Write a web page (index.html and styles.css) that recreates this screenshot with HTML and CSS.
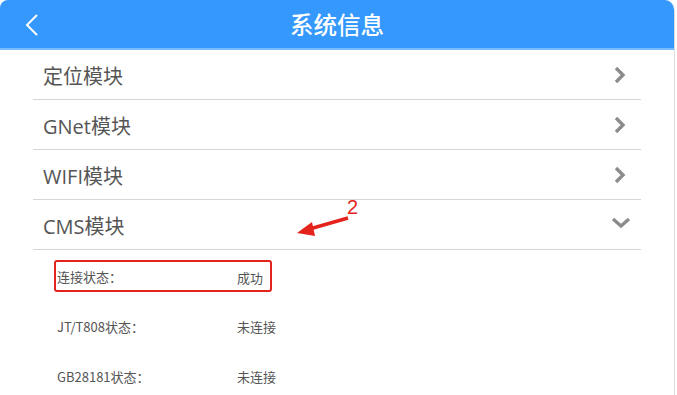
FILE: index.html
```html
<!DOCTYPE html>
<html lang="zh-CN">
<head>
  <meta charset="UTF-8" />
  <meta name="viewport" content="width=device-width, initial-scale=1.0"/>
  <title>系统信息</title>
  <link rel="stylesheet" href="styles.css">
</head>
<body>
  <div class="page">
    <div class="header">
      <svg class="back" width="14" height="24" viewBox="0 0 14 24">
        <path d="M12 2 L2 12 L12 22" fill="none" stroke="#fff" stroke-width="2"/>
      </svg>
      <span class="title">系统信息</span>
    </div>

    <div class="list">
      <div class="row">
        <span class="row-text">定位模块</span>
        <svg class="chev" width="12" height="18" viewBox="0 0 12 18"><path d="M2 2 L9 9 L2 16" fill="none" stroke="#8c8c8c" stroke-width="3.4"/></svg>
      </div>
      <div class="row">
        <span class="row-text">GNet模块</span>
        <svg class="chev" width="12" height="18" viewBox="0 0 12 18"><path d="M2 2 L9 9 L2 16" fill="none" stroke="#8c8c8c" stroke-width="3.4"/></svg>
      </div>
      <div class="row">
        <span class="row-text">WIFI模块</span>
        <svg class="chev" width="12" height="18" viewBox="0 0 12 18"><path d="M2 2 L9 9 L2 16" fill="none" stroke="#8c8c8c" stroke-width="3.4"/></svg>
      </div>
      <div class="row open">
        <span class="row-text">CMS模块</span>
        <svg class="chev-down" width="20" height="12" viewBox="0 0 20 12"><path d="M2 2 L10 9 L18 2" fill="none" stroke="#8c8c8c" stroke-width="3.4"/></svg>

        <div class="note">
          <svg width="70" height="40" viewBox="0 0 70 40">
            <path d="M58 20 L16 32" stroke="#e5231d" stroke-width="3.4" fill="none"/>
            <path d="M7 35 L22 24 L25 38 Z" fill="#e5231d"/>
          </svg>
          <span class="note-num">2</span>
        </div>
      </div>

      <div class="details">
        <div class="detail marked">
          <span class="label">连接状态：</span>
          <span class="value">成功</span>
        </div>
        <div class="detail">
          <span class="label">JT/T808状态：</span>
          <span class="value">未连接</span>
        </div>
        <div class="detail">
          <span class="label">GB28181状态：</span>
          <span class="value">未连接</span>
        </div>
      </div>
    </div>
  </div>
</body>
</html>
```

FILE: styles.css
```css
body {
  margin: 0;
  padding: 0;
  background: #fff;
  font-family: 'Open Sans', 'Noto Sans CJK SC', sans-serif;
  overflow: hidden;
}

.page {
  width: 674px;
  height: 395px;
  border-right: 1px solid #dcdcdc;
  border-radius: 8px 10px 0 0;
  overflow: hidden;
}

.header {
  height: 48px;
  background: #3498fd;
  border-bottom: 2px solid #79bbff;
  display: flex;
  align-items: center;
  justify-content: center;
  position: relative;
}

.back {
  position: absolute;
  left: 25px;
  top: 13px;
}

.title {
  color: #fff;
  font-size: 23.5px;
  font-family: 'Noto Sans CJK SC', sans-serif;
  font-weight: 500;
}

.list {
  margin: 0 33px;
}

.row {
  height: 49px;
  border-bottom: 1px solid #d6d6d6;
  display: flex;
  align-items: center;
  justify-content: space-between;
  padding: 0 15px 0 10px;
  position: relative;
}

.row-text {
  font-size: 20px;
  color: #555;
  padding-top: 2px;
}

.chev-down {
  margin-right: -5px;
  margin-top: -4px;
}

.note {
  position: absolute;
  left: 257px;
  top: -2px;
}

.note svg {
  display: block;
}

.note-num {
  position: absolute;
  left: 57px;
  top: -2px;
  color: #e5231d;
  font-size: 20px;
  font-family: 'Liberation Sans', sans-serif;
}

.details {
  padding-left: 21px;
}

.detail {
  height: 50px;
  display: flex;
  align-items: center;
  font-size: 13px;
  color: #555;
  font-family: 'Noto Sans CJK SC', sans-serif;
}

.detail.marked {
  height: 28px;
  width: 214px;
  margin: 10px 0 9px;
  border: 2px solid #e5231d;
  border-radius: 3px;
}

.label {
  width: 180px;
  padding-left: 3px;
}

.detail.marked .label {
  padding-left: 1px;
}

.detail.marked .value {
  margin-top: 3px;
}
```
